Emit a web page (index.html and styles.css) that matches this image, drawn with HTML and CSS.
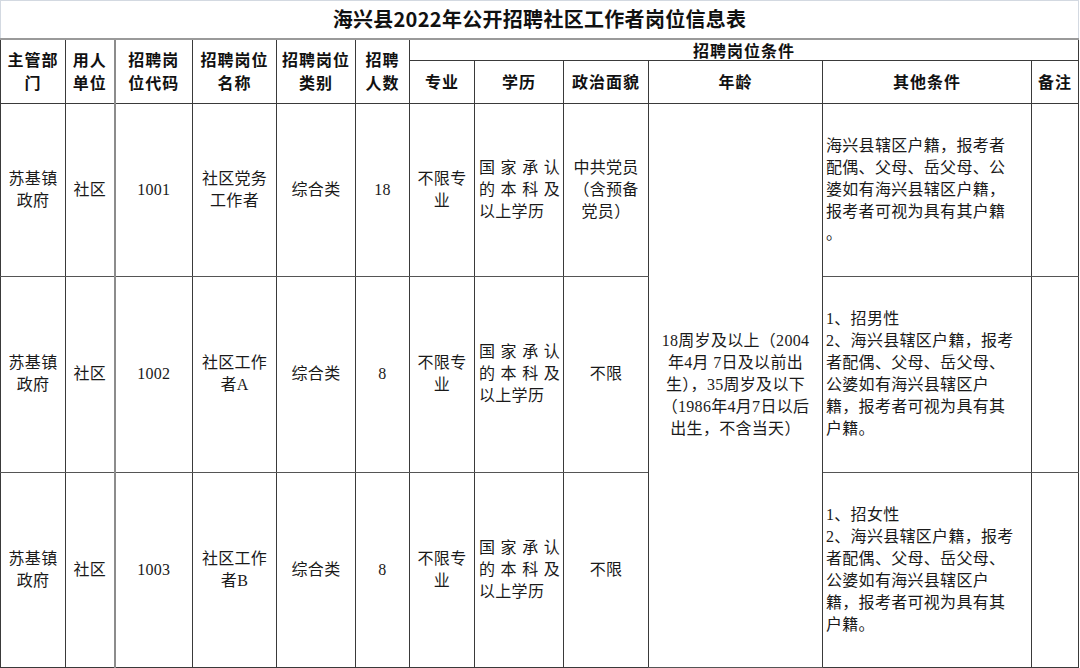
FILE: index.html
```html
<!DOCTYPE html>
<html lang="zh-CN">
<head>
<meta charset="utf-8">
<title>海兴县2022年公开招聘社区工作者岗位信息表</title>
<link rel="stylesheet" href="styles.css">
</head>
<body>
<table class="sheet">
  <colgroup>
    <col class="c1"><col class="c2"><col class="c3"><col class="c4"><col class="c5"><col class="c6">
    <col class="c7"><col class="c8"><col class="c9"><col class="c10"><col class="c11"><col class="c12">
  </colgroup>
  <tr class="r-title">
    <td class="title" colspan="12">海兴县2022年公开招聘社区工作者岗位信息表</td>
  </tr>
  <tr class="r-h1">
    <th rowspan="2">主管部<br>门</th>
    <th rowspan="2">用人<br>单位</th>
    <th rowspan="2" class="b-thick">招聘岗<br>位代码</th>
    <th rowspan="2" class="b-grey">招聘岗位<br>名称</th>
    <th rowspan="2">招聘岗位<br>类别</th>
    <th rowspan="2">招聘<br>人数</th>
    <th colspan="6" class="group">招聘岗位条件</th>
  </tr>
  <tr class="r-h2">
    <th>专业</th>
    <th>学历</th>
    <th>政治面貌</th>
    <th>年龄</th>
    <th>其他条件</th>
    <th>备注</th>
  </tr>
  <tr class="r1">
    <td>苏基镇<br>政府</td>
    <td>社区</td>
    <td class="b-thick">1001</td>
    <td class="b-grey">社区党务<br>工作者</td>
    <td>综合类</td>
    <td>18</td>
    <td>不限专<br>业</td>
    <td class="edu"><div class="jl">国家承认</div><div class="jl">的本科及</div><div>以上学历</div></td>
    <td>中共党员<br>（含预备<br>党员）</td>
    <td rowspan="3" class="age">18周岁及以上（2004<br>年4月 7日及以前出<br>生），35周岁及以下<br>（1986年4月7日以后<br>出生，不含当天）</td>
    <td class="other">海兴县辖区户籍，报考者<br>配偶、父母、岳父母、公<br>婆如有海兴县辖区户籍，<br>报考者可视为具有其户籍<br>。</td>
    <td></td>
  </tr>
  <tr class="r2">
    <td>苏基镇<br>政府</td>
    <td>社区</td>
    <td class="b-thick">1002</td>
    <td class="b-grey">社区工作<br>者A</td>
    <td>综合类</td>
    <td>8</td>
    <td>不限专<br>业</td>
    <td class="edu"><div class="jl">国家承认</div><div class="jl">的本科及</div><div>以上学历</div></td>
    <td>不限</td>
    <td class="other">1、招男性<br>2、海兴县辖区户籍，报考<br>者配偶、父母、岳父母、<br>公婆如有海兴县辖区户<br>籍，报考者可视为具有其<br>户籍。</td>
    <td></td>
  </tr>
  <tr class="r3">
    <td>苏基镇<br>政府</td>
    <td>社区</td>
    <td class="b-thick">1003</td>
    <td class="b-grey">社区工作<br>者B</td>
    <td>综合类</td>
    <td>8</td>
    <td>不限专<br>业</td>
    <td class="edu"><div class="jl">国家承认</div><div class="jl">的本科及</div><div>以上学历</div></td>
    <td>不限</td>
    <td class="other">1、招女性<br>2、海兴县辖区户籍，报考<br>者配偶、父母、岳父母、<br>公婆如有海兴县辖区户<br>籍，报考者可视为具有其<br>户籍。</td>
    <td></td>
  </tr>
</table>
</body>
</html>
```

FILE: styles.css
```css
html, body {
  margin: 0;
  padding: 0;
  background: #ffffff;
}

.sheet {
  border-collapse: collapse;
  table-layout: fixed;
  width: 1078px;
  font-family: "Liberation Serif", "Noto Sans CJK SC", serif;
  font-size: 16px;
  line-height: 22px;
  color: #1a1a1a;
}

.c1 { width: 65px; }
.c2 { width: 49px; }
.c3 { width: 78px; }
.c4 { width: 84px; }
.c5 { width: 79px; }
.c6 { width: 54px; }
.c7 { width: 65px; }
.c8 { width: 89px; }
.c9 { width: 85px; }
.c10 { width: 174px; }
.c11 { width: 209px; }
.c12 { width: 47px; }

.sheet td,
.sheet th {
  border: 1px solid #3a3a3a;
  padding: 0;
  text-align: center;
  vertical-align: middle;
  letter-spacing: 0.3px;
}

.r-title { height: 38px; }
.title {
  border-top: 1px solid #d3d9e1 !important;
  border-left: 1px solid #d3d9e1 !important;
  border-right: 1px solid #d3d9e1 !important;
  border-bottom: 2px solid #9a9a9a !important;
  font-family: "Noto Sans CJK SC", sans-serif;
  font-weight: 700;
  font-size: 20px;
  letter-spacing: 0.4px;
  color: #111;
  padding-top: 2px;
}

.sheet th {
  font-family: "Noto Sans CJK SC", sans-serif;
  font-weight: 700;
  font-size: 16px;
  line-height: 23.5px;
  letter-spacing: 1px;
  color: #111;
}

.r-h1 { height: 21px; }
.r-h2 { height: 43px; }
.r-h1 th { border-top: 2px solid #9a9a9a; }
.sheet .group { line-height: 20px; }

.r1 { height: 173px; }
.r2 { height: 196px; }
.r3 { height: 195px; }

.r1 td, .r2 td { border-bottom-color: #555; }

.b-thick { border-left: 2px solid #8c8c8c !important; }
.b-grey { border-left: 1px solid #8a8a8a !important; }

.edu {
  text-align: left !important;
  padding: 0 3px 0 4px !important;
}
.jl {
  text-align: justify;
  text-align-last: justify;
}

.age {
  padding: 0 2px !important;
}

.other {
  text-align: left !important;
  padding: 0 2px 0 3px !important;
  white-space: nowrap;
}
```
